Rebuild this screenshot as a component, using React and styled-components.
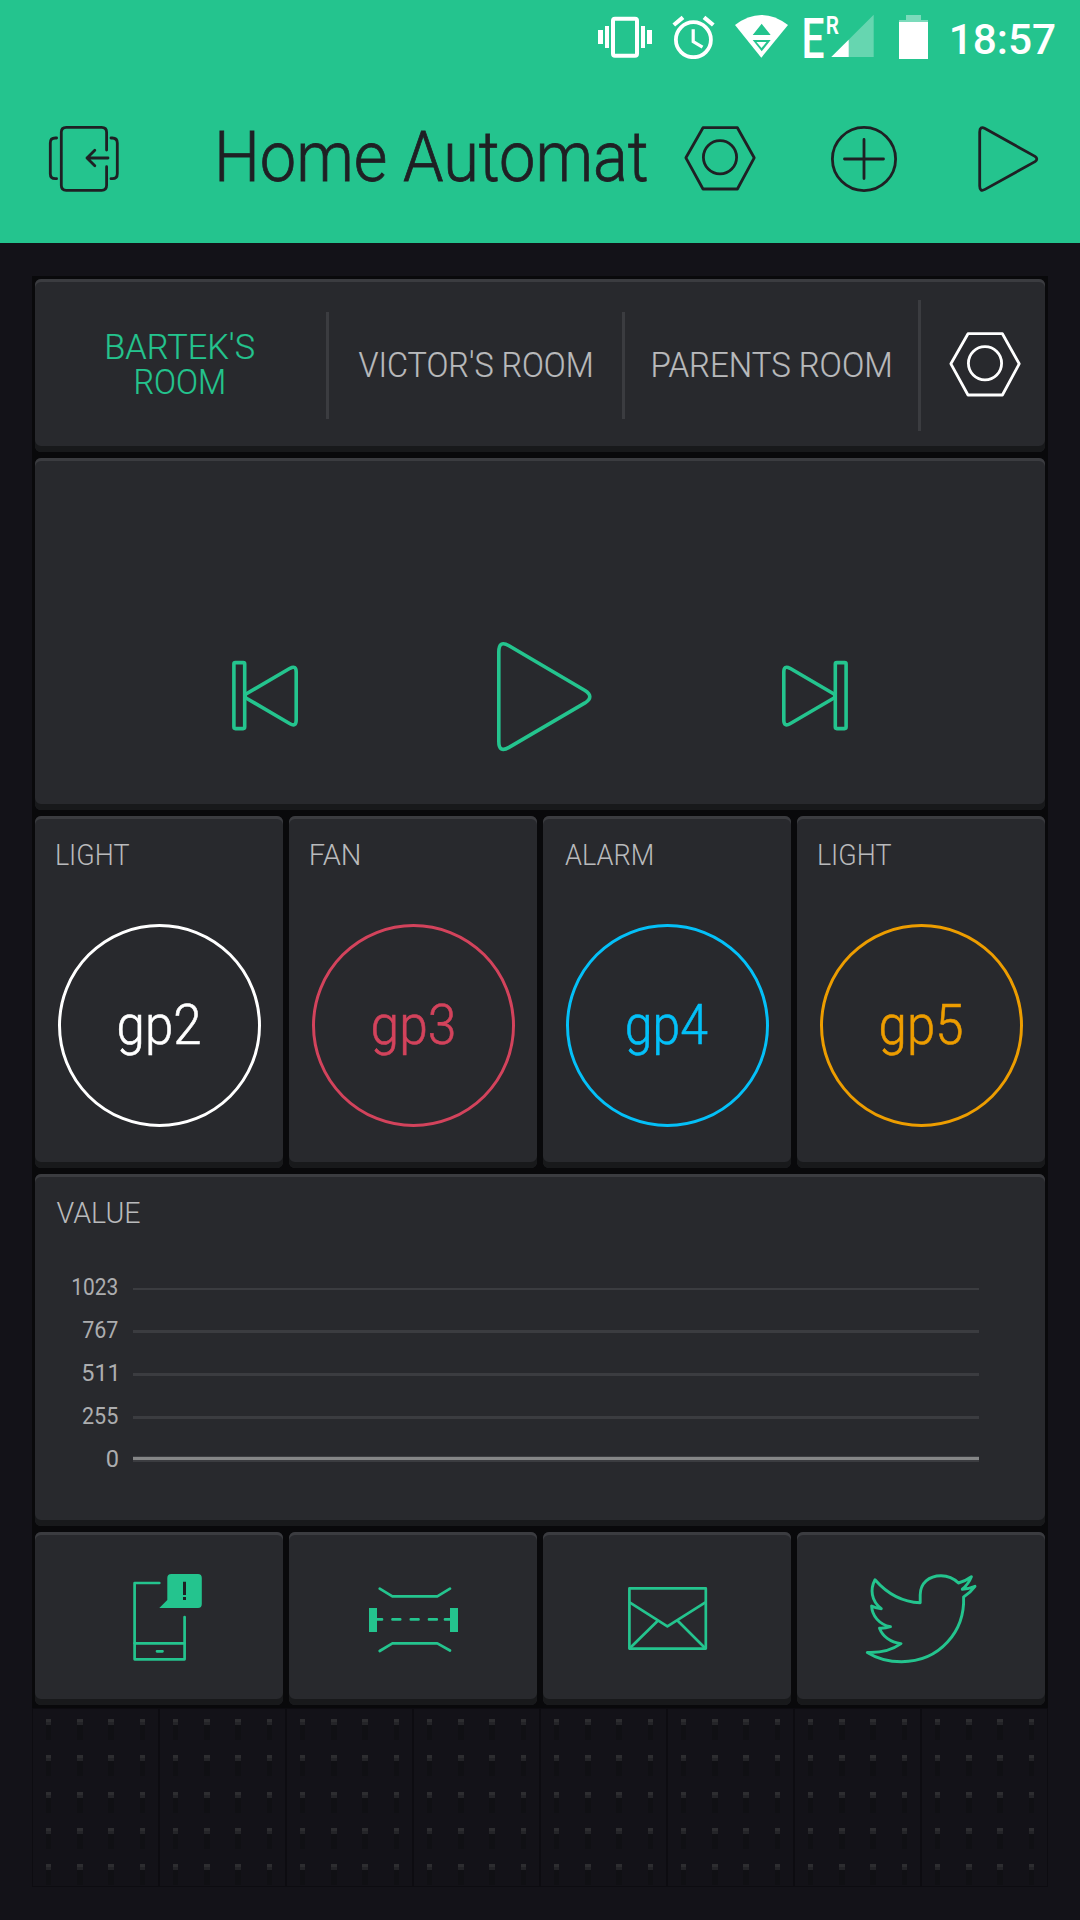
import React, { useLayoutEffect, useRef, useState } from "react";
import styled, { createGlobalStyle } from "styled-components";

const GREEN = "#24c48e";
const INK = "#1f2024";
const LINE = "#3b3c40";
const LABEL = "#b9babc";

// Squeezes a line of text horizontally so that it is exactly `width` wide
const FitText = ({ width, children }) => {
	const ref = useRef(null);
	const [fit, setFit] = useState({ scale: 1, shift: 0 });

	useLayoutEffect(() => {
		const ctx = document.createElement("canvas").getContext("2d");
		const css = getComputedStyle(ref.current);
		// measured at ten times the size, the text metrics are rounded otherwise
		ctx.font = `${css.fontWeight} ${parseFloat(css.fontSize) * 10}px ${css.fontFamily}`;
		const box = ctx.measureText(children);
		const left = box.actualBoundingBoxLeft / 10;
		const right = box.actualBoundingBoxRight / 10;
		const scale = width / (left + right);
		setFit({ scale, shift: left * scale });
	}, [width, children]);

	return (
		<FitBox $width={width}>
			<FitInner
				ref={ref}
				style={{ transform: `translateX(${fit.shift}px) scaleX(${fit.scale})` }}
			>
				{children}
			</FitInner>
		</FitBox>
	);
};

const NutIcon = () => (
	<Icon width="76" height="76" $stroke={2.8}>
		<path d="M21 8.7H55.4L72.2 38.8L55.4 70H21L3.9 38.8Z" />
		<circle cx="38" cy="38.3" r="16.6" />
	</Icon>
);

const SkipIcon = ({ flip }) => (
	<Icon width="74" height="116" $stroke={3.6}>
		<g transform={flip ? "translate(74 0) scale(-1 1)" : undefined}>
			<rect x="5.9" y="24.6" width="10.8" height="66" rx="1.5" />
			<path d="M18 56L62 30.3Q68.2 27 68.2 34V82Q68.2 89.2 62 85.7L18 60Q16 58 18 56Z" />
		</g>
	</Icon>
);

const StatusBar = () => (
	<Status>
		<StatusIcon width="58" height="47">
			<rect x="17" y="6.7" width="24" height="37" rx="2" fill="none" stroke="#fff" strokeWidth="4" />
			<path d="M2 18h5v14H2zM9 14h4v22H9zM45 14h4v22h-4zM51 18h5v14h-5z" />
		</StatusIcon>
		<StatusIcon width="46" height="47" $left={16}>
			<g fill="none" stroke="#fff">
				<circle cx="23.4" cy="27.7" r="17.5" strokeWidth="3.8" />
				<path d="M23.2 17.2V29.6L32.5 35.2" strokeWidth="3.2" />
				<path d="M3.8 13L13 5.3M34 5.3L43.3 13" strokeWidth="4.2" />
			</g>
		</StatusIcon>
		<StatusIcon width="57" height="47" $left={17}>
			<path d="M2 13Q28.3 -7 55 13L28.3 45.7Z" />
			<path d="M19.7 22.9H37.7L28.7 11.8ZM19.7 28H37.7L28.7 39.3Z" fill={GREEN} />
			<path d="M23.5 30H33.5L28.5 36Z" />
		</StatusIcon>
		<Network>
			<FitText width={19.7}>E</FitText>
			<Roaming>
				<FitText width={11.7}>R</FitText>
			</Roaming>
		</Network>
		<StatusIcon width="47" height="47" $left={5}>
			<path d="M2.3 45H44.7V2.7Z" opacity="0.3" />
			<path d="M2.3 45H19.7V27.7Z" />
		</StatusIcon>
		<StatusIcon width="33" height="47" $left={21}>
			<path d="M9 3h15v5h7v2H2V8h7z" opacity="0.4" />
			<path d="M2 10h29v37H2z" />
		</StatusIcon>
		<Clock>
			<FitText width={102.6}>18:57</FitText>
		</Clock>
	</Status>
);

const Toolbar = () => (
	<Tools>
		<Icon width="76" height="76" $stroke={2.8}>
			<path d="M60.6 31V13.3q0-5-5-5H20.3q-5 0-5 5V66.3q0 5 5 5H55.6q5 0 5-5V47.7" />
			<path d="M10.6 19H9.3q-5 0-5 5V54.7q0 5 5 5h1.3M65 19h1.3q5 0 5 5V54.7q0 5-5 5H65" />
			<path d="M62 39H41M48.8 31.3L41 39L48.8 46.7" />
		</Icon>
		<Title>
			<FitText width={428}>Home Automat</FitText>
		</Title>
		<Actions>
			<NutIcon />
			<Icon width="76" height="76" $stroke={2.8}>
				<circle cx="38" cy="40" r="31.6" />
				<path d="M18.5 40H57.5M38 20.5V59.5" />
			</Icon>
			<Icon width="76" height="76" $stroke={2.8}>
				<path d="M9.7 13Q9.7 6.8 15 9.6L65 37.4Q68.6 40 65 42.6L15 70.4Q9.7 73.2 9.7 67Z" />
			</Icon>
		</Actions>
	</Tools>
);

const Tabs = () => (
	<Slot $cols={8} $rows={1}>
		<Card>
			<TabRow>
				<Tab $active>
					<FitText width={147}>BARTEK'S</FitText>
					<FitText width={87.5}>ROOM</FitText>
				</Tab>
				<Divider $height={107} />
				<Tab>
					<FitText width={232}>VICTOR'S ROOM</FitText>
				</Tab>
				<Divider $height={107} />
				<Tab>
					<FitText width={237}>PARENTS ROOM</FitText>
				</Tab>
				<Divider $height={131} />
				<TabSettings>
					<NutIcon />
				</TabSettings>
			</TabRow>
		</Card>
	</Slot>
);

const Player = () => (
	<Slot $cols={8} $rows={2}>
		<Card>
			<Controls>
				<SkipIcon />
				<Icon width="112" height="116" $stroke={3.6}>
					<path d="M14.8 14Q14.8 1.6 25 7.8L101 52.5Q110.6 58.7 101 64.9L25 109.4Q14.8 115.4 14.8 103.4Z" />
				</Icon>
				<SkipIcon flip />
			</Controls>
		</Card>
	</Slot>
);

const buttons = [
	{ pin: "gp2", name: "LIGHT", width: 72, color: "#ffffff" },
	{ pin: "gp3", name: "FAN", width: 48, color: "#d3435c" },
	{ pin: "gp4", name: "ALARM", width: 87, color: "#04c0f8" },
	{ pin: "gp5", name: "LIGHT", width: 72, color: "#ed9d00" },
];

const PinButton = ({ item }) => (
	<Slot $cols={2} $rows={2}>
		<Card>
			<CardTitle>
				<FitText width={item.width}>{item.name}</FitText>
			</CardTitle>
			<Ring $color={item.color}>
				<FitText width={80.5}>{item.pin}</FitText>
			</Ring>
		</Card>
	</Slot>
);

const ticks = [
	{ value: "1023", width: 44, thin: true },
	{ value: "767", width: 34.5 },
	{ value: "511", width: 33, inset: 1.6 },
	{ value: "255", width: 34.5 },
	{ value: "0", width: 10.7, base: true },
];

const Chart = () => (
	<Slot $cols={8} $rows={2}>
		<Card>
			<CardTitle>
				<FitText width={83}>VALUE</FitText>
			</CardTitle>
			<Plot>
				{ticks.map((tick) => (
					<Tick key={tick.value}>
						<TickLabel $inset={tick.inset}>
							<FitText width={tick.width}>{tick.value}</FitText>
						</TickLabel>
						{tick.base ? <BaseLine /> : <GridLine $thin={tick.thin} />}
					</Tick>
				))}
			</Plot>
		</Card>
	</Slot>
);

const PhoneIcon = () => (
	<Icon width="120" height="96" $stroke={2.7}>
		<path d="M60.3 14H35.6V90.3H85.6V48" />
		<path d="M35.6 74.3H85.6M58 82.3H63.5" />
		<path
			d="M72.3 5H99Q102.8 5 102.8 9V35Q102.8 39 99 39H60.3L68.3 31V9Q68.3 5 72.3 5Z"
			fill="currentColor"
			stroke="none"
		/>
		<path d="M84 12.7h3V26h-3zM84 28h3v3h-3z" fill={INK} stroke="none" />
	</Icon>
);

const BridgeIcon = () => (
	<Icon width="120" height="96" $stroke={2.7}>
		<path d="M26.7 19.7L39.4 27.3H84.3L97 19.7M26.7 82L39.4 74.3H84.3L97 81.5" />
		<path d="M24 50.4H29M39.5 50.4H47.2M57.8 50.4H65.5M76 50.4H83.8M92 50.4H97" />
		<path d="M16 39h8v24h-8zM97 39h8v24h-8z" fill="currentColor" stroke="none" />
	</Icon>
);

const MailIcon = () => (
	<Icon width="120" height="96" $stroke={2.7}>
		<rect x="22.4" y="19.4" width="76.4" height="60.2" />
		<path d="M23 33.7L60.4 57.3L98 33.7M50.8 51.7L23 79M70.7 51.7L98 79" />
	</Icon>
);

const BirdIcon = () => (
	<Icon width="120" height="96" $stroke={2.9}>
		<path d="M14 10.7C26 24.5 42 33 59.2 33.7V26C59.2 14 68 6.7 80 6.7C87 6.7 93 9.5 97.4 14Q104 12.3 110.4 7.7Q107.5 15 101.3 20.2Q108 20 114 17.3Q109 24 102.6 28C104 62 79 92.7 40.6 92.7C28 92.7 16 89.5 6.3 83.4C19 84 31 81 40 74.6C29 73.5 21.5 67 18.5 59.2Q24 59.5 29.5 57.7C18 55.5 11 46.5 10.6 37Q15 39.5 20.3 39.7C10 32 9 20 14 10.7Z" />
	</Icon>
);

const widgets = [PhoneIcon, BridgeIcon, MailIcon, BirdIcon];

const App = () => {
	return (
		<Screen>
			<GlobalStyle />
			<Header>
				<StatusBar />
				<Toolbar />
			</Header>
			<Board>
				<Tabs />
				<Player />
				{buttons.map((item) => (
					<PinButton item={item} key={item.pin} />
				))}
				<Chart />
				{widgets.map((Glyph, i) => (
					<Slot $cols={2} $rows={1} key={i}>
						<Card>
							<Widget>
								<Glyph />
							</Widget>
						</Card>
					</Slot>
				))}
				{Array.from({ length: 8 }, (_, i) => (
					<EmptySlot key={i}>
						{Array.from({ length: 20 }, (_, n) => (
							<Dot key={n} />
						))}
					</EmptySlot>
				))}
			</Board>
		</Screen>
	);
};

const GlobalStyle = createGlobalStyle`
	* {
		box-sizing: border-box;
	}
	body {
		margin: 0;
		background-color: #131218;
	}
`;

const Screen = styled.div`
	width: 1080px;
	height: 1920px;
	overflow: hidden;
	background-color: #131218;
	font-family: Roboto, sans-serif;
	font-weight: 300;
`;

const FitBox = styled.span`
	display: block;
	width: ${(props) => props.$width}px;
	white-space: nowrap;
`;

const FitInner = styled.span`
	display: inline-block;
	transform-origin: 0 50%;
`;

const Icon = styled.svg`
	display: block;
	flex: none;
	overflow: visible;
	fill: none;
	stroke: currentColor;
	stroke-width: ${(props) => props.$stroke};
	stroke-linecap: round;
	stroke-linejoin: round;
`;

const Header = styled.header`
	height: 243px;
	background-color: ${GREEN};
	color: ${INK};
`;

const Status = styled.div`
	display: flex;
	align-items: center;
	height: 71px;
	padding-left: 596px;
	color: white;
`;

const StatusIcon = styled.svg`
	display: block;
	flex: none;
	margin-left: ${(props) => props.$left || 0}px;
	fill: white;
`;

const Network = styled.div`
	position: relative;
	margin-left: 14.3px;
	padding-top: 6px;
	font-size: 56px;
	line-height: 56px;
	font-weight: 500;
`;

const Roaming = styled.div`
	position: absolute;
	top: 7px;
	left: 23px;
	font-size: 26.5px;
	line-height: 26px;
	font-weight: 600;
`;

const Clock = styled.div`
	margin-left: 21.7px;
	padding-top: 7px;
	font-size: 43px;
	line-height: 44px;
	font-weight: 500;
`;

const Tools = styled.div`
	display: flex;
	align-items: center;
	height: 172px;
	padding-left: 46px;
`;

const Title = styled.div`
	margin: 0 35px 0 97px;
	font-size: 70px;
	line-height: 80px;
	-webkit-text-stroke: 0.8px;
`;

const Actions = styled.div`
	display: flex;
	gap: 68px;
`;

const Board = styled.main`
	display: grid;
	grid-template-columns: repeat(8, 127px);
	grid-auto-rows: 179px;
	padding: 33px 32px;
`;

const Slot = styled.section`
	grid-column: span ${(props) => props.$cols};
	grid-row: span ${(props) => props.$rows};
	padding: 3px;
	background-color: #09090b;
`;

const Card = styled.div`
	height: 100%;
	border-radius: 6px;
	background-color: #28292d;
	box-shadow: inset 0 3px ${LINE}, inset 0 -6px #18191b;
	overflow: hidden;
`;

const TabRow = styled.div`
	display: grid;
	grid-template-columns: 291px 3px 293px 3px 293px 3px 124px;
	align-items: center;
	height: 100%;
`;

const Tab = styled.div`
	display: flex;
	flex-direction: column;
	align-items: center;
	font-size: 35px;
	line-height: 35px;
	padding: 0 1px 1px 0;
	color: ${(props) => (props.$active ? GREEN : LABEL)};
	-webkit-text-stroke: 0.2px;
`;

const Divider = styled.div`
	height: ${(props) => props.$height}px;
	background-color: ${LINE};
`;

const TabSettings = styled.div`
	padding: 0 0 5px 26px;
	color: white;
`;

const Controls = styled.div`
	display: flex;
	justify-content: space-between;
	padding: 180px 193px 0;
	color: ${GREEN};
`;

const CardTitle = styled.h2`
	margin: 24px 0 0 21.7px;
	font-size: 29.5px;
	line-height: 30px;
	font-weight: 300;
	color: ${LABEL};
`;

const Ring = styled.div`
	display: flex;
	align-items: center;
	justify-content: center;
	width: 203px;
	height: 203px;
	margin: 53.5px auto 0;
	border: 3px solid ${(props) => props.$color};
	border-radius: 50%;
	font-size: 56px;
	line-height: 56px;
	color: ${(props) => props.$color};
	-webkit-text-stroke: 0.6px;
`;

const Plot = styled.div`
	margin-top: 38px;
`;

const Tick = styled.div`
	display: flex;
	align-items: center;
	height: 43px;
`;

const TickLabel = styled.div`
	display: flex;
	justify-content: flex-end;
	width: 82.3px;
	margin-right: 15.7px;
	padding: 0 ${(props) => props.$inset || 0}px 2px 0;
	font-size: 24px;
	line-height: 24px;
	font-weight: 400;
	color: #acadaf;
`;

const GridLine = styled.div`
	width: 846px;
	height: ${(props) => (props.$thin ? 2 : 3)}px;
	margin-top: 2px;
	background-color: ${LINE};
`;

const BaseLine = styled.div`
	width: 846px;
	height: 6px;
	margin-bottom: 1px;
	border: solid ${LINE};
	border-width: 1px 0 2px;
	background-color: #858687;
`;

const Widget = styled.div`
	display: flex;
	align-items: center;
	justify-content: center;
	height: 170px;
	color: ${GREEN};
`;

const EmptySlot = styled.div`
	display: grid;
	grid-template-columns: 5px 6px 6px 5px;
	grid-auto-rows: 36.3px;
	justify-content: space-between;
	padding: 10px 13px 0;
	border: 1px solid #0d0c11;
	overflow: hidden;
`;

const Dot = styled.div`
	height: 21px;
	background: linear-gradient(#2d2d30 0 3px, #242428 3px 6px, #101014 6px);
`;

export default App;
